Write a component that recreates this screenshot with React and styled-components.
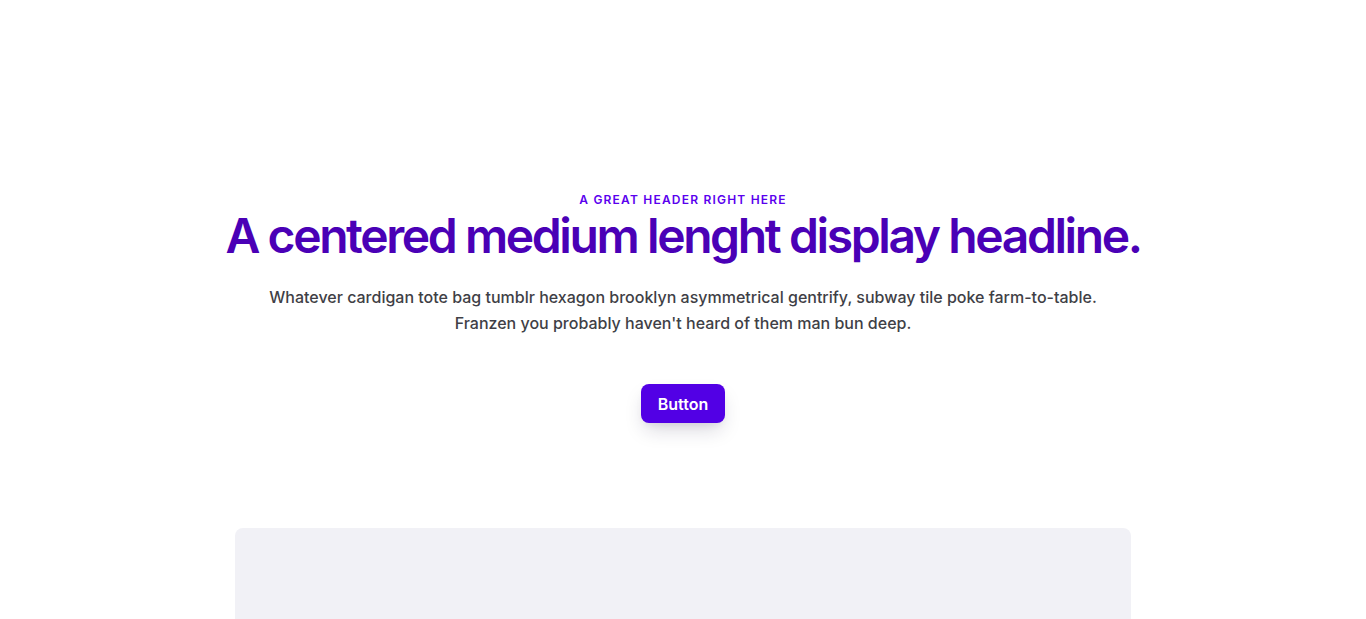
import React from "react";
import styled, { createGlobalStyle } from "styled-components";

const Global = createGlobalStyle`
  html, body { margin: 0; padding: 0; background: #ffffff; }
  body { font-family: Inter, "Noto Sans", sans-serif; -webkit-font-smoothing: antialiased; }
`;

const Page = styled.main`
  display: flex;
  flex-direction: column;
  align-items: center;
  padding-top: 192px;
`;

const Hero = styled.section`
  display: flex;
  flex-direction: column;
  align-items: center;
  text-align: center;
`;

const Eyebrow = styled.p`
  margin: 0;
  font-size: 12px;
  line-height: 16px;
  font-weight: 600;
  letter-spacing: 0.1em;
  text-transform: uppercase;
  color: #5a00ee;
`;

const Headline = styled.h1`
  margin: 4px 0 0;
  font-size: 48px;
  line-height: 48px;
  font-weight: 600;
  letter-spacing: -0.05em;
  color: #4a00b6;
`;

const Lead = styled.p`
  margin: 24px 0 0;
  max-width: 840px;
  font-size: 16px;
  line-height: 26px;
  font-weight: 500;
  color: #3f3f46;
`;

const Actions = styled.div`
  margin-top: 48px;
  display: flex;
  justify-content: center;
`;

const Button = styled.button`
  font-family: inherit;
  border: 0;
  border-radius: 8px;
  padding: 8px 17px 7px;
  font-size: 16px;
  line-height: 24px;
  font-weight: 600;
  color: #ffffff;
  background: #5200e5;
  box-shadow: 0 10px 20px -4px rgba(30, 20, 60, 0.18), 0 4px 8px -4px rgba(30, 20, 60, 0.1);
  cursor: pointer;
`;

const Showcase = styled.div`
  margin-top: 105px;
  width: 896px;
  height: 420px;
  border-radius: 8px;
  background: #f1f1f6;
`;

export default function App() {
  return (
    <>
      <Global />
      <Page>
        <Hero>
          <Eyebrow>A great header right here</Eyebrow>
          <Headline>A centered medium lenght display headline.</Headline>
          <Lead>
            Whatever cardigan tote bag tumblr hexagon brooklyn asymmetrical gentrify, subway tile poke farm-to-table.
            Franzen you probably haven't heard of them man bun deep.
          </Lead>
          <Actions>
            <Button>Button</Button>
          </Actions>
        </Hero>
        <Showcase />
      </Page>
    </>
  );
}
